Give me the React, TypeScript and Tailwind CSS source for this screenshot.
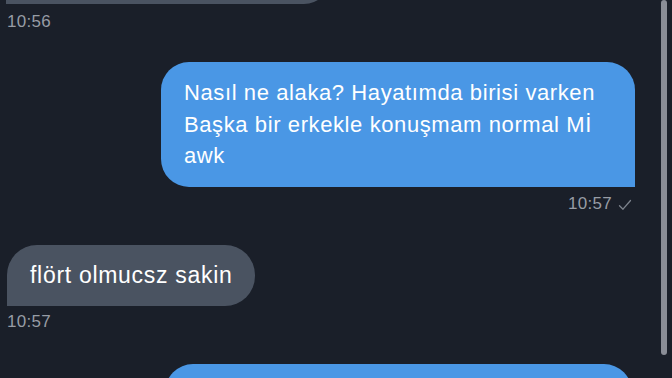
import React from 'react';

const font = { fontFamily: '"Liberation Sans", Arial, sans-serif' };

const Check = () => (
  <svg width="14" height="12" viewBox="0 0 14 12" fill="none" className="ml-[6px] mt-[1px]">
    <path d="M1.5 6.8 L5 10.2 L12.5 1.5" stroke="#7d838d" strokeWidth="1.3" strokeLinecap="round" strokeLinejoin="round" />
  </svg>
);

const App = () => {
  return (
    <div className="relative w-[672px] h-[378px] overflow-hidden bg-[#1a1f29]" style={font}>
      {/* Scrollbar */}
      <div className="absolute right-[5px] top-0 w-[6px] h-[355px] rounded-full bg-[#8a8d96]" />

      <div className="flex flex-col">
        {/* Received (cut off) */}
        <div className="pl-[6px] mt-[-56px]">
          <div className="w-[324px] h-[60px] rounded-[26px] rounded-bl-none bg-[#4a5361]" />
        </div>
        <div className="pl-[7px] mt-[9px] text-[17px] leading-[18px] tracking-[0.3px] text-[#979ca5]">10:56</div>

        {/* Sent */}
        <div className="flex justify-end pr-[37px] mt-[31px]">
          <div className="w-[474px] h-[125px] rounded-[28px] rounded-br-none bg-[#4a97e5] pl-[23px] pt-[15px] text-[22px] leading-[31.5px] tracking-[0.6px] text-white">
            <div>Nasıl ne alaka? Hayatımda birisi varken</div>
            <div>Başka bir erkekle konuşmam normal Mİ</div>
            <div>awk</div>
          </div>
        </div>
        <div className="flex justify-end items-center pr-[40px] mt-[8px] text-[17px] leading-[18px] tracking-[0.3px] text-[#979ca5]">
          <span>10:57</span>
          <Check />
        </div>

        {/* Received */}
        <div className="pl-[7px] mt-[32px]">
          <div className="inline-flex items-center h-[61px] rounded-[30px] rounded-bl-none bg-[#4a5361] pl-[23px] pr-[23px] text-[23px] tracking-[0.7px] text-white">
            flört olmucsz sakin
          </div>
        </div>
        <div className="pl-[7px] mt-[7px] text-[17px] leading-[18px] tracking-[0.3px] text-[#979ca5]">10:57</div>

        {/* Sent (cut off) */}
        <div className="flex justify-end pr-[40px] mt-[33px]">
          <div className="w-[467px] h-[60px] rounded-[28px] rounded-br-none bg-[#4a97e5]" />
        </div>
      </div>
    </div>
  );
};

export default App;
